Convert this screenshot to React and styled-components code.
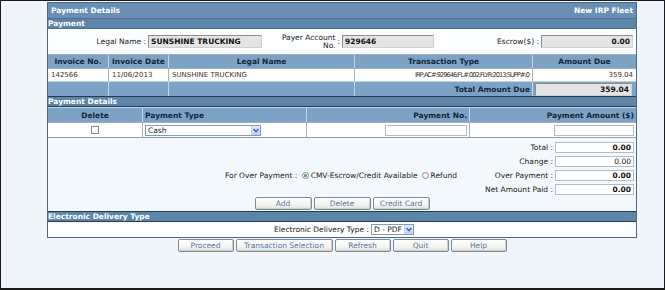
import React from 'react';
import styled, { createGlobalStyle } from 'styled-components';

const Global = createGlobalStyle`
  html, body { margin: 0; padding: 0; }
  body {
    background: #eff5fb;
    font-family: "DejaVu Sans", Verdana, sans-serif;
    font-size: 7.5px;
    color: #222;
  }
  * { box-sizing: border-box; }
`;

const Frame = styled.div`
  width: 665px;
  height: 290px;
  border: 1px solid #1a1a1a;
  border-bottom-width: 2px;
  background: #eff5fb;
  padding: 1px 0 0 46px;
`;

const Column = styled.div`
  width: 590px;
`;

const Panel = styled.div`
  border: 1px solid #52687e;
  background: #f3f8fc;
`;

const TitleBar = styled.div`
  height: 15px;
  background: #6990b4;
  color: #fff;
  font-weight: bold;
  display: flex;
  justify-content: space-between;
  align-items: center;
  padding: 0 3px;
`;

const SectionBar = styled.div`
  height: 11px;
  background: #5c85a9;
  color: #fff;
  font-weight: bold;
  display: flex;
  align-items: center;
  border-top: 1px solid ${p => p.$dark ? '#233b53' : '#4d7090'};
  border-bottom: 1px solid ${p => p.$dark ? '#233b53' : '#4d7090'};
`;

const PayerRow = styled.div`
  height: 25px;
  background: #fcfdff;
  display: grid;
  grid-template-columns: 100px 114px 80px 92px 107px 92px;
  align-items: center;
`;

const Label = styled.div`
  text-align: right;
  padding-right: 2px;
  white-space: nowrap;
  color: #222;
`;

const TwoLineLabel = styled.div`
  display: flex;
  justify-content: flex-end;
  align-items: center;
  gap: 2px;
  padding-right: 2px;
  line-height: 8px;
  text-align: right;
`;

const GreyField = styled.div`
  height: 13px;
  background: #e4e4e4;
  border: 1px solid #8e8e8e;
  border-right-color: #d0d0d0;
  border-bottom-color: #d0d0d0;
  font-weight: bold;
  color: #111;
  display: flex;
  align-items: center;
  justify-content: ${p => p.$right ? 'flex-end' : 'flex-start'};
  padding: 0 2px;
  width: ${p => p.$w ? p.$w + 'px' : 'auto'};
`;

const Row = styled.div`
  display: grid;
  grid-template-columns: ${p => p.$cols};
  column-gap: 1px;
  background: ${p => p.$sep};
  height: ${p => p.$h}px;
  border-top: 1px solid ${p => p.$bt || 'transparent'};
`;

const HeadCell = styled.div`
  background: #7ca3c6;
  color: #13263b;
  font-weight: bold;
  display: flex;
  align-items: center;
  justify-content: ${p => p.$align || 'center'};
  padding: 0 2px;
  white-space: nowrap;
`;

const DataCell = styled.div`
  background: #fff;
  color: #333;
  display: flex;
  align-items: center;
  justify-content: ${p => p.$align || 'flex-start'};
  padding: 0 3px;
  white-space: nowrap;
  font-size: 7px;
`;

const Squeezed = styled.span`
  font-size: 6.6px;
  letter-spacing: -0.95px;
`;

const BlankCell = styled.div`
  background: #7ca3c6;
  display: flex;
  align-items: center;
  justify-content: flex-end;
  padding: 0 2px;
  color: #13263b;
  font-weight: bold;
  white-space: nowrap;
`;

const FieldCell = styled.div`
  background: #7ca3c6;
  display: flex;
  align-items: center;
  padding: 0 2px;
`;

const PayRow = styled.div`
  display: grid;
  grid-template-columns: 94px 163px 162px 1fr;
  column-gap: 1px;
  background: #9fb1c3;
  height: 16px;
  border-top: 1px solid #9fb1c3;
  border-bottom: 1px solid #8ea0b2;
`;

const PayCell = styled.div`
  background: #fff;
  display: flex;
  align-items: center;
  justify-content: ${p => p.$align || 'flex-start'};
  padding: 0 2px;
`;

const Checkbox = styled.span`
  width: 8px;
  height: 8px;
  border: 1px solid #7c8a98;
  background: #fdfdfd;
`;

const FakeSelect = styled.div`
  width: ${p => p.$w}px;
  height: 11px;
  border: 1px solid #7f9db9;
  background: #fff;
  display: flex;
  align-items: center;
  justify-content: space-between;
  padding-left: 2px;
  color: #222;
`;

const SelectArrow = styled.span`
  width: 9px;
  height: 100%;
  background: linear-gradient(#e3ecfb, #bcd0f3);
  border-left: 1px solid #c4d4ee;
  display: flex;
  align-items: center;
  justify-content: center;
`;

const WhiteField = styled.div`
  width: ${p => p.$w}px;
  height: 11px;
  border: 1px solid #b4bcc6;
  background: #fff;
  font-weight: ${p => p.$bold ? 'bold' : 'normal'};
  color: #111;
  display: flex;
  align-items: center;
  justify-content: flex-end;
  padding: 0 2px;
`;

const TotalsArea = styled.div`
  padding-top: 2px;
  height: 73px;
`;

const TotalsGrid = styled.div`
  display: grid;
  grid-template-columns: 1fr 84px 81px;
  grid-auto-rows: 14px;
  align-items: center;
`;

const RadioLine = styled.div`
  display: flex;
  justify-content: flex-end;
  align-items: center;
  padding-right: 14px;
  gap: 2px;
  white-space: nowrap;
`;

const Radio = styled.span`
  width: 7px;
  height: 7px;
  border-radius: 50%;
  border: 1px solid #7a8796;
  background: #fff;
  display: inline-flex;
  align-items: center;
  justify-content: center;
  margin-left: ${p => p.$ml || 0}px;
  &::after {
    content: '';
    width: 3px;
    height: 3px;
    border-radius: 50%;
    background: ${p => p.$on ? '#3c9a2e' : 'transparent'};
  }
`;

const ButtonBar = styled.div`
  display: flex;
  justify-content: center;
  gap: 2px;
  margin-top: ${p => p.$mt || 0}px;
`;

const Button = styled.button`
  width: ${p => p.$w || 57}px;
  height: 13px;
  padding: 0;
  font-family: "DejaVu Sans", Verdana, sans-serif;
  font-size: 7.5px;
  color: #5077a8;
  background: linear-gradient(#ffffff, #f4f4f1 60%, #e3e3dd);
  border: 1px solid #7e8c9a;
  border-radius: 2px;
  box-shadow: inset -1px -1px 0 #cfcfc8;
`;

const DeliveryRow = styled.div`
  height: 15px;
  background: #fcfdff;
  display: flex;
  justify-content: center;
  align-items: center;
  gap: 2px;
  padding-left: 4px;
`;

const Chevron = () => (
  <svg width="6" height="5" viewBox="0 0 6 5">
    <path d="M0.6 1 L3 3.6 L5.4 1" fill="none" stroke="#3a63b5" strokeWidth="1.4" />
  </svg>
);

const invCols = '60px 59px 185px 177px 1fr';

export default function App() {
  return (
    <>
      <Global />
      <Frame>
        <Column>
          <Panel>
            <TitleBar>
              <span>Payment Details</span>
              <span>New IRP Fleet</span>
            </TitleBar>
            <SectionBar>Payment</SectionBar>
            <PayerRow>
              <Label>Legal Name :</Label>
              <GreyField>SUNSHINE TRUCKING</GreyField>
              <TwoLineLabel>
                <span>Payer Account<br />No.</span>
                <span>:</span>
              </TwoLineLabel>
              <GreyField>929646</GreyField>
              <Label>Escrow($) :</Label>
              <GreyField $right>0.00</GreyField>
            </PayerRow>
            <Row $cols={invCols} $sep="#c4d4e3" $h={14} $bt="#9fb1c3">
              <HeadCell>Invoice No.</HeadCell>
              <HeadCell>Invoice Date</HeadCell>
              <HeadCell>Legal Name</HeadCell>
              <HeadCell>Transaction Type</HeadCell>
              <HeadCell>Amount Due</HeadCell>
            </Row>
            <Row $cols={invCols} $sep="#9fb1c3" $h={13} $bt="#9fb1c3">
              <DataCell>142566</DataCell>
              <DataCell>11/06/2013</DataCell>
              <DataCell>SUNSHINE TRUCKING</DataCell>
              <DataCell $align="flex-end">
                <Squeezed>IRP;AC#:929646;FL#:002;FLYR:2013;SUPP#:0</Squeezed>
              </DataCell>
              <DataCell $align="flex-end">359.04</DataCell>
            </Row>
            <Row $cols={invCols} $sep="#c4d4e3" $h={15} $bt="#c4d4e3">
              <BlankCell />
              <BlankCell />
              <BlankCell />
              <BlankCell>Total Amount Due</BlankCell>
              <FieldCell>
                <GreyField $right $w={97}>359.04</GreyField>
              </FieldCell>
            </Row>
            <SectionBar $dark>Payment Details</SectionBar>
            <Row $cols="94px 163px 162px 1fr" $sep="#c4d4e3" $h={15}>
              <HeadCell>Delete</HeadCell>
              <HeadCell $align="flex-start">Payment Type</HeadCell>
              <HeadCell $align="flex-end">Payment No.</HeadCell>
              <HeadCell $align="flex-end">Payment Amount ($)</HeadCell>
            </Row>
            <PayRow>
              <PayCell $align="center"><Checkbox /></PayCell>
              <PayCell>
                <FakeSelect $w={116}>
                  <span>Cash</span>
                  <SelectArrow><Chevron /></SelectArrow>
                </FakeSelect>
              </PayCell>
              <PayCell $align="flex-end"><WhiteField $w={82} /></PayCell>
              <PayCell $align="flex-end"><WhiteField $w={80} /></PayCell>
            </PayRow>
            <TotalsArea>
              <TotalsGrid>
                <span />
                <Label>Total :</Label>
                <WhiteField $w={79} $bold>0.00</WhiteField>
                <span />
                <Label>Change :</Label>
                <WhiteField $w={79}>0.00</WhiteField>
                <RadioLine>
                  <span>For Over Payment :&nbsp;</span>
                  <Radio $on />
                  <span>CMV-Escrow/Credit Available</span>
                  <Radio $ml={2} />
                  <span>Refund</span>
                </RadioLine>
                <Label>Over Payment :</Label>
                <WhiteField $w={79} $bold>0.00</WhiteField>
                <span />
                <Label>Net Amount Paid :</Label>
                <WhiteField $w={79} $bold>0.00</WhiteField>
              </TotalsGrid>
              <ButtonBar $mt={1}>
                <Button>Add</Button>
                <Button>Delete</Button>
                <Button>Credit Card</Button>
              </ButtonBar>
            </TotalsArea>
            <SectionBar $dark>Electronic Delivery Type</SectionBar>
            <DeliveryRow>
              <span>Electronic Delivery Type :</span>
              <FakeSelect $w={43}>
                <span>D - PDF</span>
                <SelectArrow><Chevron /></SelectArrow>
              </FakeSelect>
            </DeliveryRow>
          </Panel>
          <ButtonBar $mt={1}>
            <Button $w={56}>Proceed</Button>
            <Button $w={97}>Transaction Selection</Button>
            <Button $w={56}>Refresh</Button>
            <Button $w={56}>Quit</Button>
            <Button $w={56}>Help</Button>
          </ButtonBar>
        </Column>
      </Frame>
    </>
  );
}
